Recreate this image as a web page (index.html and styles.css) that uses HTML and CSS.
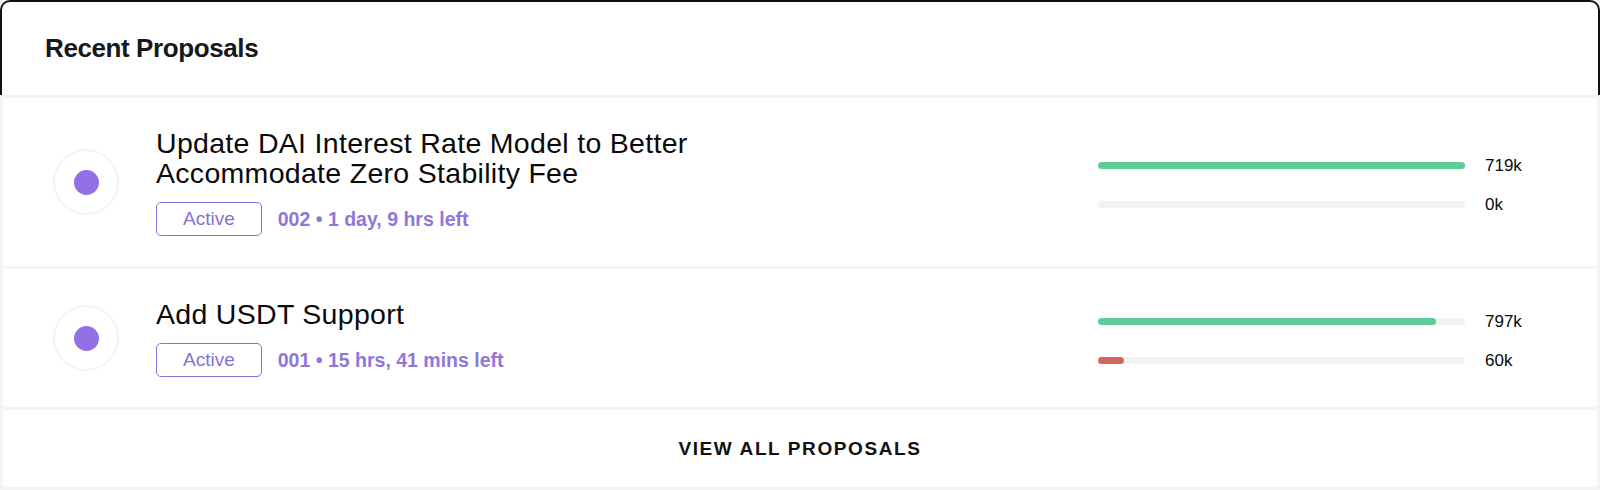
FILE: index.html
```html
<!DOCTYPE html>
<html lang="en">
    <head>
        <meta charset="UTF-8" />
        <meta name="viewport" content="width=device-width, initial-scale=1.0" />
        <title>Recent Proposals</title>
        <link rel="stylesheet" href="styles.css">
    </head>
    <body>
        <div class="panel">
            <div class="panel-header">
                <h2>Recent Proposals</h2>
            </div>

            <div class="proposal">
                <div class="status-icon"><span class="dot"></span></div>
                <div class="details">
                    <div class="title">Update DAI Interest Rate Model to Better<br />Accommodate Zero Stability Fee</div>
                    <div class="meta">
                        <span class="badge">Active</span>
                        <span class="info">002 &bull; 1 day, 9 hrs left</span>
                    </div>
                </div>
                <div class="votes">
                    <div class="track"><div class="fill for" style="width: 100%"></div></div>
                    <span class="count">719k</span>
                    <div class="track"><div class="fill against" style="width: 0%"></div></div>
                    <span class="count">0k</span>
                </div>
            </div>

            <div class="proposal">
                <div class="status-icon"><span class="dot"></span></div>
                <div class="details">
                    <div class="title">Add USDT Support</div>
                    <div class="meta">
                        <span class="badge">Active</span>
                        <span class="info">001 &bull; 15 hrs, 41 mins left</span>
                    </div>
                </div>
                <div class="votes">
                    <div class="track"><div class="fill for" style="width: 92%"></div></div>
                    <span class="count">797k</span>
                    <div class="track"><div class="fill against" style="width: 7%"></div></div>
                    <span class="count">60k</span>
                </div>
            </div>

            <a class="view-all" href="#">View All Proposals</a>
        </div>
    </body>
</html>
```

FILE: styles.css
```css
body {
    font-family: "Liberation Sans", Arial, sans-serif;
    margin: 0;
    padding: 0;
    background-color: #f4f4f5;
}
.panel {
    display: flex;
    flex-direction: column;
    gap: 3px;
    padding-bottom: 3px;
    background-color: #f4f4f5;
}
.panel-header {
    background-color: #fff;
    border: 2px solid #111;
    border-bottom: none;
    border-radius: 10px 10px 0 0;
    height: 93px;
    padding: 0 43px;
    display: flex;
    align-items: center;
}
.panel-header h2 {
    margin: 0;
    font-size: 26px;
    font-weight: bold;
    letter-spacing: -0.4px;
    color: #16181c;
}
.proposal {
    background-color: #fff;
    margin: 0 3px;
    padding: 30px 62px 30px 50px;
    display: flex;
    align-items: center;
}
.status-icon {
    width: 62px;
    height: 62px;
    border: 2px solid #f4f3f8;
    border-radius: 50%;
    display: flex;
    align-items: center;
    justify-content: center;
    flex-shrink: 0;
}
.dot {
    width: 25px;
    height: 25px;
    border-radius: 50%;
    background-color: #9370e6;
}
.details {
    flex: 1;
    margin-left: 37px;
}
.title {
    font-size: 28.5px;
    line-height: 30px;
    color: #0a0a0a;
    letter-spacing: 0.3px;
}
.meta {
    display: flex;
    align-items: center;
    margin-top: 14px;
}
.badge {
    border: 1px solid #8a6fd8;
    border-radius: 5px;
    color: #8a6fd8;
    font-size: 19px;
    line-height: 20px;
    padding: 6px 26px;
}
.info {
    margin-left: 16px;
    color: #8f77d9;
    font-size: 19.5px;
    font-weight: bold;
}
.votes {
    display: grid;
    grid-template-columns: 367px 50px;
    column-gap: 20px;
    row-gap: 18px;
    align-items: center;
    padding-top: 5px;
}
.track {
    height: 7px;
    border-radius: 4px;
    background-color: #f2f2f2;
}
.fill {
    height: 100%;
    border-radius: 4px;
}
.fill.for {
    background-color: #60cd99;
}
.fill.against {
    background-color: #cf665f;
}
.count {
    font-size: 17px;
    line-height: 21px;
    color: #0a0a0a;
}
.view-all {
    background-color: #fff;
    margin: 0 3px;
    height: 77px;
    display: flex;
    align-items: center;
    justify-content: center;
    font-size: 19px;
    font-weight: bold;
    letter-spacing: 1.6px;
    text-transform: uppercase;
    color: #111;
    text-decoration: none;
}
```
